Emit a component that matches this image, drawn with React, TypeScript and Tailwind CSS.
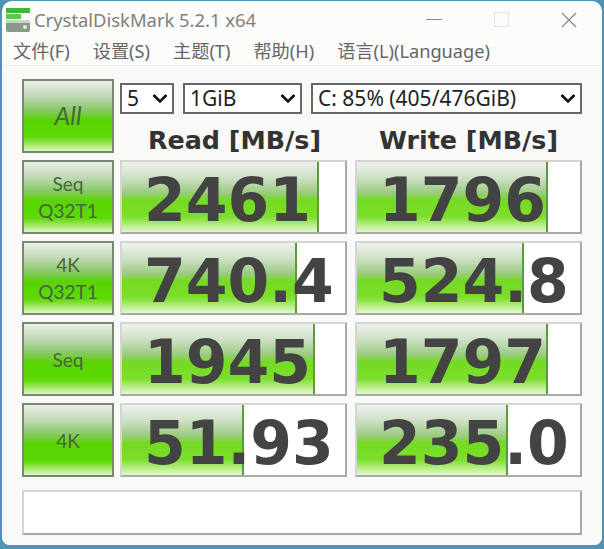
const ROWS = [
  { label: ['Seq', 'Q32T1'], read: '2461', readBar: 197, write: '1796', writeBar: 191 },
  { label: ['4K', 'Q32T1'], read: '740.4', readBar: 175, write: '524.8', writeBar: 167 },
  { label: ['Seq'], read: '1945', readBar: 193, write: '1797', writeBar: 191 },
  { label: ['4K'], read: '51.93', readBar: 122, write: '235.0', writeBar: 151 },
]

const MENU = ['文件(F)', '设置(S)', '主题(T)', '帮助(H)', '语言(L)(Language)']

const BUTTON_GREEN =
  'bg-[linear-gradient(to_bottom,#eaefe8_0%,#c0d8b4_22%,#86c862_42%,#58d400_56%,#5cd804_80%,#c0ee90_95%,#dcf6c4_100%)]'
const BAR_GREEN =
  'bg-[linear-gradient(to_bottom,#eef1ec_0%,#cfe0c6_22%,#9acb80_44%,#74da22_54%,#7cde2c_78%,#c8f2a0_94%,#e0f8cc_100%)]'

function Chevron() {
  return (
    <svg width="16" height="11" viewBox="0 0 16 11" className="shrink-0">
      <path d="M1.5 2 L8 8.5 L14.5 2" fill="none" stroke="#111" strokeWidth="2.6" />
    </svg>
  )
}

function Picker({ text, className }: { text: string; className: string }) {
  return (
    <div className={`flex h-[31px] items-center justify-between border-[2px] border-[#666] bg-white pl-[5px] pr-[4px] text-[21px] text-[#222] ${className}`}>
      <span>{text}</span>
      <Chevron />
    </div>
  )
}

function TestButton({ lines, large }: { lines: string[]; large?: boolean }) {
  return (
    <div className={`flex h-[74px] w-[92px] shrink-0 flex-col items-center justify-center border-[2px] border-[#76896f] font-['Lato',sans-serif] text-[#47663f] ${BUTTON_GREEN} ${large ? 'text-[25px] italic' : 'text-[19px] leading-[27px]'}`}>
      {lines.map(l => <span key={l}>{l}</span>)}
    </div>
  )
}

function Score({ value, bar }: { value: string; bar: number }) {
  return (
    <div className="relative h-[74px] w-[227px] overflow-hidden border-[2px] border-[#d4d4d4] border-r-[#a8a8a8] border-b-[#a8a8a8] bg-white">
      <div
        className={`absolute inset-y-0 left-0 border-r-[2px] border-r-[#5a9a40] ${BAR_GREEN}`}
        style={{ width: bar }}
      />
      <div className="absolute left-[22px] top-[3px] font-['DejaVu_Sans',sans-serif] text-[60px] font-bold leading-[70px] text-[#434343]">
        {value}
      </div>
    </div>
  )
}

export default function App() {
  return (
    <div className="h-[549px] w-[604px] overflow-hidden bg-[#4f93b8] px-[2px] pb-[4px] pt-[1px]">
      <div className="flex h-full flex-col overflow-hidden rounded-t-[10px] rounded-b-[8px] bg-[#fbfbf9] font-['Noto_Sans','Noto_Sans_CJK_SC',sans-serif]">
        {/* Title bar */}
        <div className="flex h-[37px] shrink-0 items-center pl-[3px] pr-[25px]">
          <svg width="26" height="26" viewBox="0 0 26 26" className="shrink-0">
            <rect x="1" y="1" width="24" height="5" fill="#3cb83c" />
            <rect x="1" y="7" width="15" height="5" fill="#58c850" />
            <rect x="1" y="13" width="24" height="12" rx="2" fill="#8a9a8a" />
            <rect x="1" y="13" width="24" height="3" fill="#c8d4c8" />
            <circle cx="20" cy="20" r="2" fill="#e4ece4" />
          </svg>
          <span className="ml-[3px] text-[18.4px] text-[#808080]">CrystalDiskMark 5.2.1 x64</span>
          <div className="ml-auto flex items-center gap-[52px]">
            <div className="h-[1px] w-[16px] bg-[#888]" />
            <div className="h-[15px] w-[15px] border border-[#e4e4e4]" />
            <svg width="16" height="16" viewBox="0 0 16 16">
              <path d="M1 1 L15 15 M15 1 L1 15" stroke="#888" strokeWidth="1.2" />
            </svg>
          </div>
        </div>

        {/* Menu */}
        <div className="flex h-[28px] shrink-0 items-center gap-[23px] border-b border-[#eeeeee] pl-[11px] text-[18.2px] text-[#666]">
          {MENU.map(m => <span key={m}>{m}</span>)}
        </div>

        {/* Body */}
        <div className="flex flex-1 flex-col gap-[7px] bg-[#f9f9f8] px-[20px] pt-[13px]">
          <div className="flex h-[74px] gap-[6px]">
            <TestButton lines={['All']} large />
            <div className="flex-1">
              <div className="flex gap-[9px] pt-[4px]">
                <Picker text="5" className="w-[54px]" />
                <Picker text="1GiB" className="w-[119px]" />
                <Picker text="C: 85% (405/476GiB)" className="flex-1" />
              </div>
              <div className="mt-[11px] flex gap-[8px] font-['DejaVu_Sans',sans-serif] text-[25.4px] font-bold leading-[30px] text-[#333]">
                <div className="w-[227px] pl-[2px] text-center">Read [MB/s]</div>
                <div className="w-[227px] text-center">Write [MB/s]</div>
              </div>
            </div>
          </div>

          {ROWS.map(r => (
            <div key={r.read} className="flex gap-[6px]">
              <TestButton lines={r.label} />
              <div className="flex gap-[8px]">
                <Score value={r.read} bar={r.readBar} />
                <Score value={r.write} bar={r.writeBar} />
              </div>
            </div>
          ))}

          <div className="mt-[6px] h-[45px] border-[2px] border-[#d4d4d4] border-r-[#a8a8a8] border-b-[#a8a8a8] bg-white" />
        </div>
      </div>
    </div>
  )
}
